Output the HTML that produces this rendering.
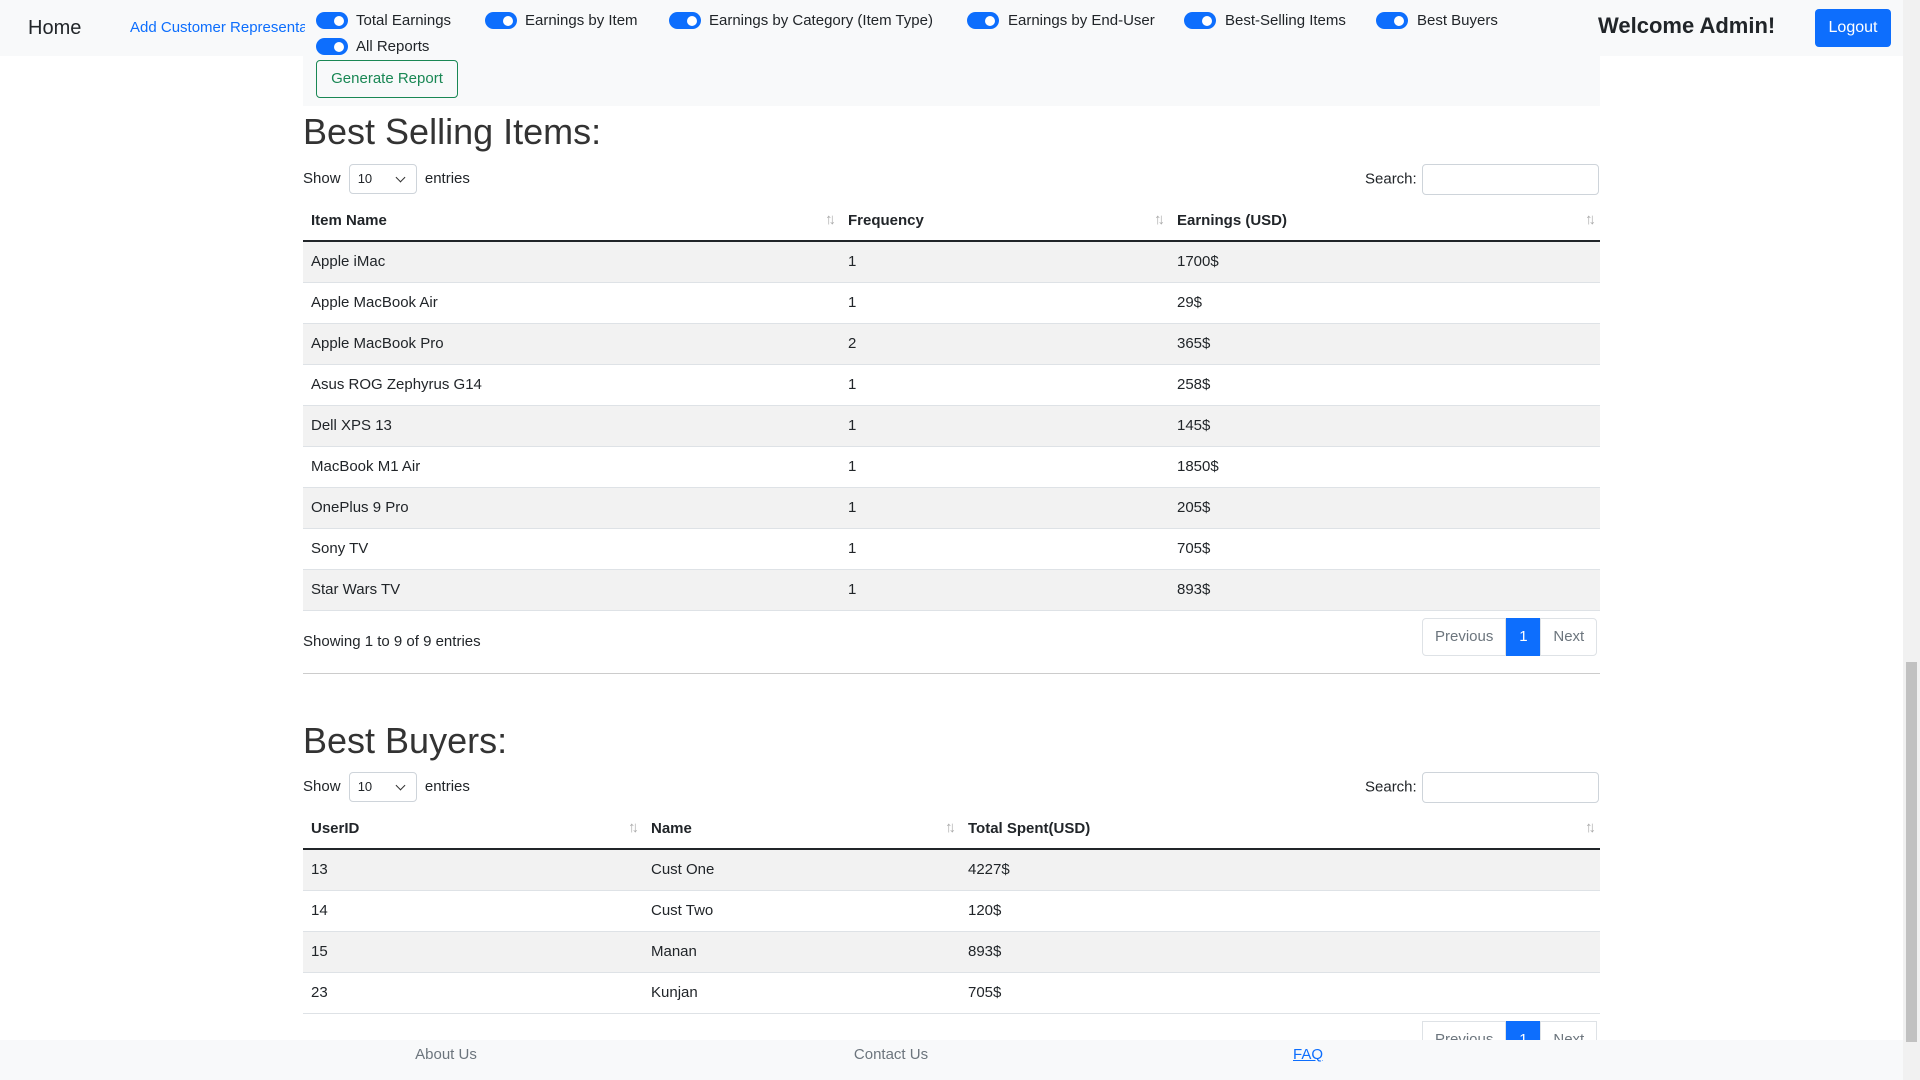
<!DOCTYPE html>
<html><head><meta charset="utf-8">
<style>
*{box-sizing:border-box;margin:0;padding:0}
body{width:1920px;height:1080px;overflow:hidden;background:#fff;font-family:"Liberation Sans",sans-serif;font-size:15px;color:#212529;position:relative}
.abs{position:absolute}
.nav{left:0;top:0;width:1903px;height:56px;background:#f8f9fa}
.formbg{left:303px;top:0;width:1297px;height:106px;background:#f8f9fa}
.sw{position:absolute;width:32px;height:17px;border-radius:9px;background:#0d6efd}
.sw:after{content:"";position:absolute;right:4px;top:3.5px;width:10px;height:10px;border-radius:50%;background:#fff}
.lbl{position:absolute;font-size:15px}
.btn-o{left:316px;top:60px;width:142px;height:38px;border:1px solid #198754;border-radius:4px;color:#198754;font-size:15px;line-height:36px;text-align:center}
h1{position:absolute;font-weight:normal;font-size:36px;left:303px;color:#333}
.show{position:absolute;left:303px;font-size:15px}
.sel{display:inline-block;width:68px;height:30px;border:1px solid #ced4da;border-radius:4px;vertical-align:middle;margin:0 4px;padding:0 8px;line-height:28px;font-size:13px;position:relative}
.sel:after{content:"";position:absolute;right:12px;top:9px;width:6px;height:6px;border-right:1.5px solid #333;border-bottom:1.5px solid #333;transform:rotate(45deg)}
.srch{position:absolute;left:1365px;font-size:15px}
.srch span{display:inline-block;width:177px;height:31px;border:1px solid #ced4da;border-radius:4px;vertical-align:middle;margin-left:5px}
table{position:absolute;left:303px;width:1297px;border-collapse:collapse;font-size:15px}
th{text-align:left;font-weight:bold;height:41px;padding:0 8px;border-bottom:2px solid #212529;position:relative}
th:after{content:"↑↓";position:absolute;right:8px;top:11px;color:#aaa;font-weight:normal;font-size:15px;letter-spacing:-4px}
td{height:41px;padding:0 8px;border-bottom:1px solid #dee2e6}
tbody tr:nth-child(odd) td{background:#f2f2f2}
.pag{position:absolute;left:1422px;height:38px;display:flex;font-size:15px}
.pag div{border:1px solid #dee2e6;line-height:36px;padding:0 12px;color:#6c757d}
.pag .act{background:#0d6efd;color:#fff;border-color:#0d6efd;width:34px;padding:0;text-align:center}
.foot{left:0;top:1040px;width:1903px;height:40px;background:#f8f9fa;font-size:15px;color:#6c757d}
.foot span{position:absolute;top:6px;transform:translateX(-50%)}
</style></head><body>
<div class="abs nav"></div>
<div class="abs formbg"></div>
<div class="abs" style="left:28px;top:17px;font-size:20px">Home</div>
<div class="abs" style="left:130px;top:19px;font-size:15px;color:#0d6efd;width:175px;overflow:hidden;white-space:nowrap">Add Customer Representative</div>

<div class="sw" style="left:316px;top:12px"></div><div class="lbl" style="left:356px;top:12px">Total Earnings</div>
<div class="sw" style="left:485px;top:12px"></div><div class="lbl" style="left:525px;top:12px">Earnings by Item</div>
<div class="sw" style="left:669px;top:12px"></div><div class="lbl" style="left:709px;top:12px">Earnings by Category (Item Type)</div>
<div class="sw" style="left:967px;top:12px"></div><div class="lbl" style="left:1008px;top:12px">Earnings by End-User</div>
<div class="sw" style="left:1184px;top:12px"></div><div class="lbl" style="left:1225px;top:12px">Best-Selling Items</div>
<div class="sw" style="left:1376px;top:12px"></div><div class="lbl" style="left:1417px;top:12px">Best Buyers</div>
<div class="sw" style="left:316px;top:38px"></div><div class="lbl" style="left:356px;top:38px">All Reports</div>
<div class="abs btn-o">Generate Report</div>

<div class="abs" style="left:1598px;top:13px;font-size:22px;font-weight:bold">Welcome Admin!</div>
<div class="abs" style="left:1815px;top:9px;width:76px;height:38px;background:#0d6efd;border-radius:4px;color:#fff;text-align:center;line-height:38px;font-size:16px">Logout</div>

<h1 style="top:111px">Best Selling Items:</h1>
<div class="show" style="top:164px">Show <span class="sel">10</span> entries</div>
<div class="srch" style="top:164px">Search:<span></span></div>
<table style="top:200px">
<thead><tr><th style="width:537px">Item Name</th><th style="width:329px">Frequency</th><th>Earnings (USD)</th></tr></thead>
<tbody>
<tr><td>Apple iMac</td><td>1</td><td>1700$</td></tr>
<tr><td>Apple MacBook Air</td><td>1</td><td>29$</td></tr>
<tr><td>Apple MacBook Pro</td><td>2</td><td>365$</td></tr>
<tr><td>Asus ROG Zephyrus G14</td><td>1</td><td>258$</td></tr>
<tr><td>Dell XPS 13</td><td>1</td><td>145$</td></tr>
<tr><td>MacBook M1 Air</td><td>1</td><td>1850$</td></tr>
<tr><td>OnePlus 9 Pro</td><td>1</td><td>205$</td></tr>
<tr><td>Sony TV</td><td>1</td><td>705$</td></tr>
<tr><td>Star Wars TV</td><td>1</td><td>893$</td></tr>
</tbody></table>
<div class="abs" style="left:303px;top:633px">Showing 1 to 9 of 9 entries</div>
<div class="pag" style="top:618px"><div style="border-radius:4px 0 0 4px">Previous</div><div class="act">1</div><div style="border-radius:0 4px 4px 0">Next</div></div>
<div class="abs" style="left:303px;top:673px;width:1297px;height:1px;background:#ccc"></div>

<h1 style="top:720px">Best Buyers:</h1>
<div class="show" style="top:772px">Show <span class="sel">10</span> entries</div>
<div class="srch" style="top:772px">Search:<span></span></div>
<table style="top:808px">
<thead><tr><th style="width:340px">UserID</th><th style="width:317px">Name</th><th>Total Spent(USD)</th></tr></thead>
<tbody>
<tr><td>13</td><td>Cust One</td><td>4227$</td></tr>
<tr><td>14</td><td>Cust Two</td><td>120$</td></tr>
<tr><td>15</td><td>Manan</td><td>893$</td></tr>
<tr><td>23</td><td>Kunjan</td><td>705$</td></tr>
</tbody></table>
<div class="pag" style="top:1021px"><div>Previous</div><div class="act">1</div><div>Next</div></div>

<div class="abs foot">
<span style="left:446px">About Us</span>
<span style="left:891px">Contact Us</span>
<span style="left:1308px;color:#0d6efd;text-decoration:underline">FAQ</span>
</div>
<div class="abs" style="left:1903px;top:0;width:17px;height:1080px;background:#f1f1f1"></div>
<div class="abs" style="left:1906px;top:662px;width:11px;height:380px;background:#c1c1c1"></div>
</body></html>
